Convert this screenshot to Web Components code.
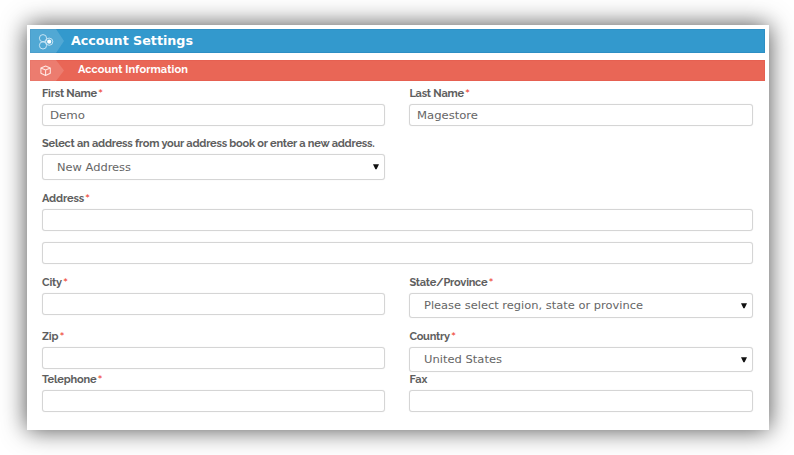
<!DOCTYPE html>
<html lang="en">
<head>
<meta charset="utf-8">
<title>Account Settings</title>
<style>
html,body{margin:0;height:100%;background:#fff;overflow:hidden}
body{font-family:"DejaVu Sans",sans-serif;color:#666}
</style>
</head>
<body>
<account-page></account-page>
<script>
// Text fitted to a given width, by letter-spacing or (with "stretch") by horizontal scale.
class FitText extends HTMLElement{
  connectedCallback(){
    this.attachShadow({mode:'open'}).innerHTML=`<style>:host{display:inline-block;white-space:nowrap}span{display:inline-block;transform-origin:0 50%}</style><span><slot></slot></span>`;
    const s=this.shadowRoot.querySelector('span');
    const w=parseFloat(this.getAttribute('w')),n=this.textContent.length;
    const now=s.getBoundingClientRect().width;
    this.style.width=w+'px';
    if(this.hasAttribute('stretch'))s.style.transform=`scaleX(${(w/now).toFixed(4)})`;
    else s.style.letterSpacing=((w-now)/n).toFixed(3)+'px';
  }
}
class TitleBar extends HTMLElement{
  connectedCallback(){
    this.attachShadow({mode:'open'}).innerHTML=`<style>
    :host{display:flex;align-items:center;box-sizing:border-box;color:#fff;font-weight:bold;white-space:nowrap;background:#3399cd;border:1px solid #2d8fc4;height:24px;font-size:11.5px}
    :host([kind=sub]){background:#e96656;border-color:#e66051;height:21px;font-family:Raleway,"Lato",sans-serif;font-size:11px}
    .tab{align-self:stretch;width:34px;margin:-1px 0 -1px -1px;background:rgba(255,255,255,.15);clip-path:polygon(0 0,26px 0,100% 50%,26px 100%,0 100%);display:flex;align-items:center}
    .t{margin-left:7px;line-height:20px}
    :host([kind=sub]) .t{margin:-1px 0 0 14px}
    </style><div class="tab"><slot name="icon"></slot></div><div class="t"><slot></slot></div>`;
  }
}
class FormField extends HTMLElement{
  connectedCallback(){
    const a=k=>this.getAttribute(k);
    const sel=this.hasAttribute('select');
    this.attachShadow({mode:'open'}).innerHTML=`<style>
    :host{display:block;min-width:0}
    .l{height:16px;margin-bottom:3px;display:flex;font:bold 11px/17px Raleway,"Lato",sans-serif;color:#5e5e5e}
    .l i{font:normal 12px/18px "Lato",sans-serif;color:#ee3b2b;margin-left:1px}
    .b{box-sizing:border-box;height:22px;border:1px solid #d5d5d5;border-radius:3px;background:#fff;display:flex;align-items:center;padding:0 5px 0 6.5px;font-size:11px;color:#666;justify-content:space-between;box-shadow:0 0 1px #ddd}
    .b.s{height:var(--h,25px);padding-left:14px}
    .b+.b{margin-top:11px}
    </style>
    <div class="l"><fit-text w="${a('lw')}">${a('label')}</fit-text>${this.hasAttribute('required')?'<i>*</i>':''}</div>
    <div class="b ${sel?'s':''}">${a('value')?`<fit-text stretch w="${a('vw')}">${a('value')}</fit-text>`:''}${sel?'<svg width="6" height="6" viewBox="0 0 6 6"><path d="M0 .3h6L3.6 5.3H2.4z" fill="#111"/></svg>':''}</div>
    ${this.hasAttribute('double')?'<div class="b"></div>':''}`;
  }
}
class AccountPage extends HTMLElement{
  connectedCallback(){
    this.attachShadow({mode:'open'}).innerHTML=`<style>
    :host{display:block;box-sizing:border-box;height:455px;padding:25px 25px 25px 27px}
    .card{box-sizing:border-box;width:742px;height:405px;background:#fff;padding:4px 4px 0 3px;box-shadow:0 0 23px 0 rgba(0,0,0,.7)}
    .sub{margin-top:7px}
    .form{display:grid;grid-template-columns:343.4px 343.4px;column-gap:24px;grid-template-rows:50px 55px 84px 54px 43px 41px;margin:4px 0 0 12px}
    .wide{grid-column:1/-1}
    svg{display:block}
    </style>
    <div class="card">
      <title-bar><svg slot="icon" width="26" height="24" viewBox="0 0 26 24" fill="none" stroke="#d3eaf7" stroke-width=".9"><circle cx="13" cy="9.2" r="3.6"/><circle cx="13" cy="16.4" r="3.6"/><circle cx="19.2" cy="12.7" r="3.6"/><circle cx="19.2" cy="12.7" r="2.1" fill="#fff" stroke="none"/></svg><fit-text stretch w="122">Account Settings</fit-text></title-bar>
      <title-bar class="sub" kind="sub"><svg slot="icon" width="26" height="21" viewBox="0 0 26 21" fill="none" stroke="#ffe5e0" stroke-width="1.1" stroke-linejoin="round"><path d="M15.6 6l4.7 1.9v5.4l-4.7 2.2-4.7-2.2V7.9zM10.9 7.9l4.7 2 4.7-2M15.6 9.9v5.6"/></svg><fit-text w="110">Account Information</fit-text></title-bar>
      <div class="form">
        <form-field label="First Name" lw="55" required value="Demo" vw="35"></form-field>
        <form-field label="Last Name" lw="54.5" required value="Magestore" vw="61"></form-field>
        <form-field class="wide" style="width:343.4px;--h:26px" label="Select an address from your address book or enter a new address." lw="332.5" select value="New Address" vw="74"></form-field>
        <form-field class="wide" label="Address" lw="42" required double></form-field>
        <form-field label="City" lw="20" required></form-field>
        <form-field label="State/Province" lw="78" required select value="Please select region, state or province" vw="219"></form-field>
        <form-field label="Zip" lw="16.5" required></form-field>
        <form-field label="Country" lw="40.5" required select value="United States" vw="78"></form-field>
        <form-field label="Telephone" lw="54.5" required></form-field>
        <form-field label="Fax" lw="18"></form-field>
      </div>
    </div>`;
  }
}
customElements.define('fit-text',FitText);
customElements.define('title-bar',TitleBar);
customElements.define('form-field',FormField);
customElements.define('account-page',AccountPage);
</script>
</body>
</html>
